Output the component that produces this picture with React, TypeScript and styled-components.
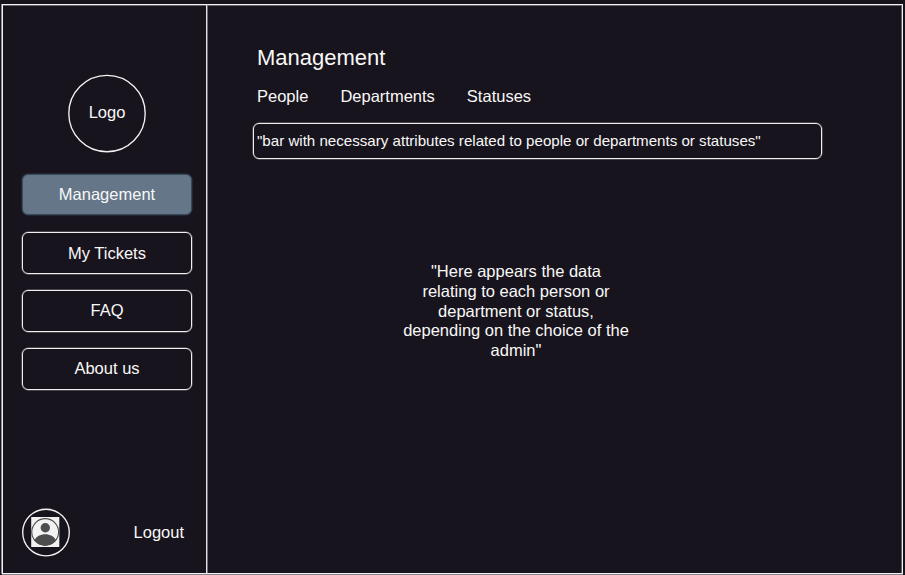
import React from "react";
import styled, { createGlobalStyle } from "styled-components";

const Global = createGlobalStyle`
  * { box-sizing: border-box; }
  html, body { margin: 0; background: #18141d; overflow: hidden; }
`;

const Page = styled.div`
  width: 905px;
  height: 575px;
  padding: 4px 2px 1px;
  background: #18141d;
  color: #f8f8f8;
  font: 16.5px/20px "Liberation Sans", Arial, sans-serif;
`;

const Frame = styled.div`
  display: flex;
  width: 901px;
  height: 570px;
  border: 1px solid #f2f2f2;
  box-shadow: inset 0 1px #67656b, inset -1px 0 #67656b, -1px 0 #8b898e, 0 1px #858387;
`;

const Sidebar = styled.aside`
  display: flex;
  flex-direction: column;
  width: 204px;
  padding: 69px 14px 0 19px;
  border-right: 1px solid #e4e2e4;
  box-shadow: 1px 0 #737177;
`;

const Logo = styled.div`
  display: grid;
  place-items: center;
  width: 78px;
  height: 79px;
  margin: 0 0 20px 46px;
  svg, span { grid-area: 1 / 1; }
  span { margin-top: -4px; }
`;

const Nav = styled.nav`
  display: flex;
  flex-direction: column;
  gap: 16px;
`;

const NavButton = styled.button<{ $active?: boolean; $raised?: boolean }>`
  width: 170px;
  height: ${(p) => (p.$active ? 41 : 42)}px;
  margin: ${(p) => (p.$active ? "1px 0" : "0")};
  padding: 0 0 ${(p) => (p.$raised || p.$active ? 2 : 0)}px;
  border: 1px solid ${(p) => (p.$active ? "#36495a" : "#f0f0f0")};
  border-radius: 6px;
  background: ${(p) => (p.$active ? "#647687" : "transparent")};
  box-shadow: 0 0 0 0.5px ${(p) => (p.$active ? "#2c3b49" : "#77747b")};
  color: inherit;
  font: inherit;
`;

const Account = styled.div`
  display: flex;
  align-items: center;
  justify-content: space-between;
  width: 162px;
  height: 50px;
  margin: auto 0 16px;
`;

const Main = styled.main`
  flex: 1;
  padding: 40px 0 0 46px;
`;

const Title = styled.h1`
  margin: 0 0 15px 4px;
  font-size: 22px;
  line-height: 26px;
  font-weight: 400;
`;

const Tabs = styled.div`
  display: flex;
  gap: 32px;
  margin: 0 0 17px 4px;
`;

const Attributes = styled.div`
  width: 569px;
  height: 36px;
  padding-left: 3px;
  border: 1px solid #f0f0f0;
  border-radius: 6px;
  box-shadow: 0 0 0 0.5px #77747b;
  font-size: 15.12px;
  line-height: 33px;
`;

const Message = styled.p`
  width: 228px;
  margin: 103px 0 0 149px;
  line-height: 19.8px;
  text-align: center;
`;

export default function App() {
  return (
    <Page>
      <Global />
      <Frame>
        <Sidebar>
          <Logo>
            <svg width="78" height="79" viewBox="0 0 78 79">
              <circle cx="39" cy="39.5" r="38.2" fill="none" stroke="#f2f2f2" strokeWidth="1.35" />
            </svg>
            <span>Logo</span>
          </Logo>
          <Nav>
            <NavButton $active>Management</NavButton>
            <NavButton>My Tickets</NavButton>
            <NavButton $raised>FAQ</NavButton>
            <NavButton $raised>About us</NavButton>
          </Nav>
          <Account>
            <svg width="48" height="50" viewBox="0 0 48 50" fill="none">
              <circle cx="24" cy="25.5" r="23.3" stroke="#f2f2f2" strokeWidth="1.35" />
              <path d="M9.200 10h28.100v30H9.200z" fill="#f2f2f2" />
              <circle cx="23.2" cy="25" r="13.4" stroke="#4d4d4d" strokeWidth="1.1" />
              <circle cx="23.3" cy="20.7" r="4.7" fill="#4d4d4d" />
              <path d="M12.500 33.500C14 29.500 18.500 27.300 23.200 27.300s9.200 2.200 10.800 6.200C31.700 36.700 27.500 38.400 23.200 38.400s-8.500-1.700-10.700-4.900z" fill="#4d4d4d" />
            </svg>
            <span>Logout</span>
          </Account>
        </Sidebar>
        <Main>
          <Title>Management</Title>
          <Tabs>
            <span>People</span>
            <span>Departments</span>
            <span>Statuses</span>
          </Tabs>
          <Attributes>"bar with necessary attributes related to people or departments or statuses"</Attributes>
          <Message>
            "Here appears the data relating to each person or department or status, depending on the choice of the admin"
          </Message>
        </Main>
      </Frame>
    </Page>
  );
}
